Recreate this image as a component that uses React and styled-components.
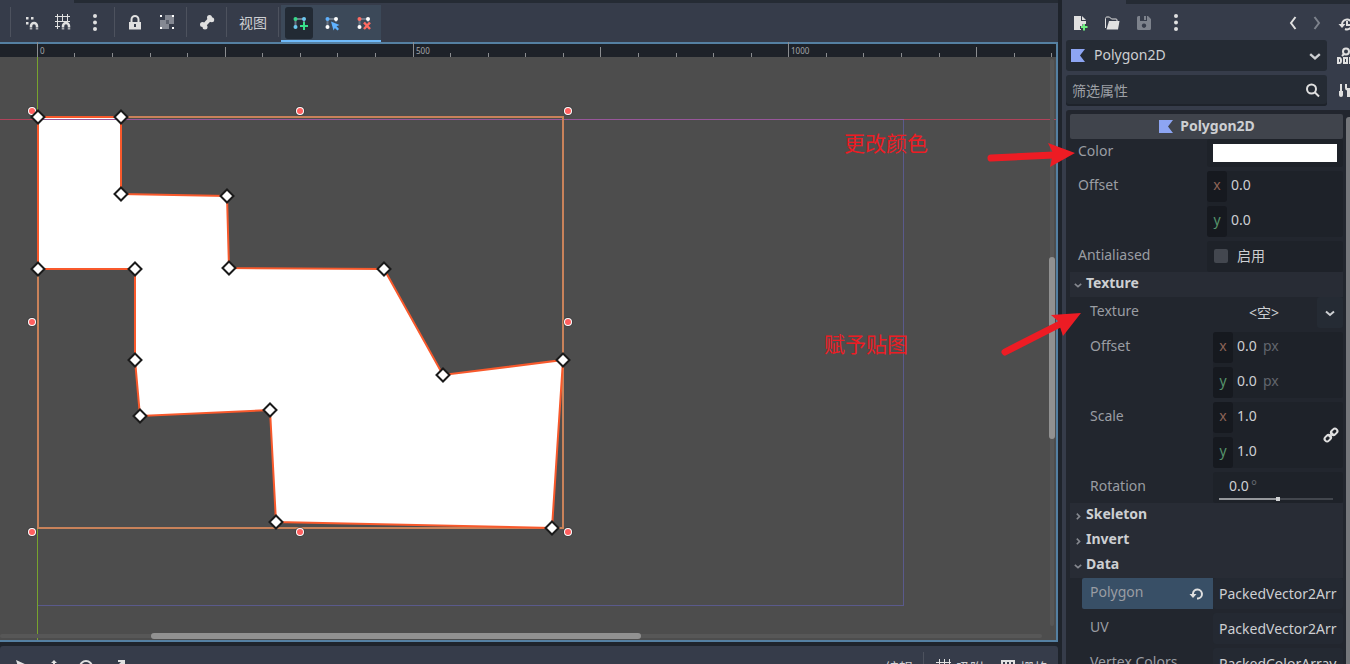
import React from "react";
import styled, { createGlobalStyle, css } from "styled-components";

const c = {
  base: "#1f242c",
  bar: "#363c4a",
  strip: "#252b34",
  field: "#1e2229",
  panel: "#22262e",
  section: "#282c35",
  accent: "#70bafa",
  icon: "#e0e0e0",
  text: "#cdcfd2",
  dim: "#9a9da3",
};

const Global = createGlobalStyle`
  * { box-sizing: border-box; }
  body {
    margin: 0;
    background: ${c.base};
    color: ${c.text};
    font: 14px/20px "Noto Sans", "Noto Sans CJK SC", sans-serif;
    overflow: hidden;
  }
  button, input, select { font: inherit; color: inherit; margin: 0; padding: 0; border: 0; background: none; }
  svg { display: block; overflow: visible; flex: none; }
`;

const Editor = styled.div`
  position: relative;
  display: flex;
  gap: 4px;
  height: 100vh;
  overflow: hidden;
`;

const Workspace = styled.main`
  flex: 1;
  min-width: 0;
  display: flex;
  flex-direction: column;
`;

const TabStrip = styled.div`
  flex: none;
  height: ${(p) => p.$height}px;
  background: ${c.strip};
  &::before {
    content: "";
    display: block;
    width: ${(p) => p.$tab}px;
    height: 100%;
    background: ${c.bar};
  }
`;

const Toolbar = styled.div`
  flex: none;
  display: flex;
  align-items: flex-start;
  height: 39px;
  padding: 4px 5px 0;
  background: ${c.bar};
`;

const ToolGroup = styled.div`
  display: flex;
  gap: 4px;
`;

const ContextGroup = styled(ToolGroup)`
  height: 37px;
  margin-top: -2px;
  padding: 2px 4px 0;
  background: #3c4959;
  border-bottom: 2px solid ${c.accent};
`;

const ToolButton = styled.button`
  display: flex;
  align-items: center;
  justify-content: center;
  width: ${(p) => p.$width || 28}px;
  height: 32px;
  border-radius: 3px;
  ${(p) => p.$active && css`background: #222a34;`}
`;

const Separator = styled.span`
  width: 1px;
  height: 30px;
  margin: 0 ${(p) => (p.$flush ? 2 : 6)}px 0 5px;
  background: #4d525e;
`;

const Viewport = styled.section`
  flex: 1;
  min-height: 0;
  position: relative;
  display: flex;
  flex-direction: column;
  border: 2px solid #5580a2;
  border-left: 0;
  background: #4d4d4d;
`;

const Ruler = styled.svg`
  width: 100%;
  height: 13px;
  background: ${c.field};
`;

const Canvas = styled.svg`
  width: 100%;
  flex: 1 1 0;
  min-height: 0;
  overflow: hidden;
`;

const ScrollTrack = styled.div`
  position: absolute;
  border-radius: 3px;
  background: #575757;
  ${(p) =>
    p.$vertical
      ? css`top: 15px; right: 2px; bottom: 14px; width: 4px;`
      : css`left: 0; right: 14px; bottom: 2px; height: 4px;`}
`;

const ScrollThumb = styled.div`
  position: absolute;
  border-radius: 3px;
  background: #919191;
  ${(p) =>
    p.$vertical
      ? css`top: 35%; height: 32%; left: -1px; width: 6px;`
      : css`left: 14.5%; width: 47%; top: -1px; height: 6px;`}
`;

const BottomDock = styled.div`
  flex: none;
  height: 18px;
  margin-top: 4px;
  overflow: hidden;
  border-radius: 3px 3px 0 0;
  background: ${c.bar};
`;

const BottomBar = styled.div`
  display: flex;
  align-items: center;
  height: 44px;
  padding: 0 10px 0 12px;
`;

const BottomTools = styled.div`
  display: flex;
  gap: 16px;
  margin-right: auto;
`;

const BottomToggles = styled.div`
  display: flex;
  gap: 16px;
`;

const BarButton = styled.button`
  display: flex;
  align-items: center;
  gap: 4px;
  color: ${c.text};
`;

const BarSeparator = styled.span`
  width: 1px;
  height: 32px;
  margin: 0 12px 0 10px;
  background: #4d525e;
`;

const Inspector = styled.aside`
  flex: 0 0 288px;
  min-width: 0;
  display: flex;
  flex-direction: column;
  background: ${c.bar};
`;

const DockHeader = styled.div`
  flex: none;
  display: flex;
  height: 36px;
  padding: 3px 0 0 4px;
`;

const DockNav = styled(ToolGroup)`
  margin-left: auto;
`;

const DockRow = styled.div`
  flex: none;
  display: flex;
  height: 31px;
  margin-bottom: 4px;
  padding-left: 4px;
`;

const EdgeButton = styled.button`
  display: flex;
  align-items: center;
  width: 23px;
  padding-left: ${(p) => p.$inset || 10}px;
  overflow: hidden;
`;

const InputBox = styled.label`
  flex: 1;
  min-width: 0;
  display: flex;
  align-items: center;
  padding: 0 6px 0 ${(p) => (p.$search ? 6 : 4)}px;
  border-radius: 3px;
  background: ${c.strip};
  ${(p) => p.$search && css`box-shadow: inset 0 -2px #1e232b;`}
`;

const NodeSelect = styled.select`
  flex: 1;
  min-width: 0;
  margin-left: 8px;
  padding-bottom: 2px;
  appearance: none;
  outline: 0;
`;

const SearchInput = styled.input`
  flex: 1;
  min-width: 0;
  outline: 0;
  &::placeholder { color: #9da0a6; opacity: 1; }
`;

const Panel = styled.div`
  flex: 1;
  min-height: 0;
  display: flex;
  gap: 3px;
  margin-left: 4px;
  padding: 4px 0 0 4px;
  overflow: hidden;
  border-top-left-radius: 3px;
  background: ${c.panel};
`;

const Properties = styled.div`
  flex: 1;
  min-width: 0;
`;

const PanelScroll = styled.div`
  width: 4px;
  margin-top: 3px;
  border-radius: 3px 0 0 0;
  background: #75777b;
`;

const Category = styled.h2`
  display: flex;
  align-items: center;
  justify-content: center;
  gap: 6px;
  height: 25px;
  margin: 0;
  border-radius: 2px;
  background: #40444c;
  font-size: 14px;
  line-height: 20px;
`;

const CategoryName = styled.span`
  padding-bottom: 2px;
`;

const SectionButton = styled.button`
  display: flex;
  align-items: center;
  gap: 4px;
  width: 100%;
  height: 25px;
  padding: 0 4px;
  background: ${c.section};
  font-weight: 700;
`;

const SectionName = styled.span`
  padding-bottom: 4px;
`;

const Rows = styled.div`
  display: grid;
  gap: 4px;
  padding-left: ${(p) => (p.$nested ? 12 : 0)}px;
`;

const Row = styled.div`
  display: grid;
  grid-template-columns: minmax(0, 1fr) ${(p) => (p.$nested ? 130 : 136)}px;
`;

const RowLabel = styled.label`
  display: flex;
  justify-content: space-between;
  align-items: center;
  height: ${(p) => (p.$short ? 28 : 31)}px;
  padding: 0 8px 4px;
  color: ${c.dim};
  ${(p) => p.$changed && css`background: #384f66; border-radius: 2px 0 0 2px;`}
`;

const RevertSlot = styled.span`
  padding-top: 4px;
`;

const Field = styled.div`
  position: relative;
  display: grid;
  gap: 4px;
  align-items: start;
  min-width: 0;
  border-radius: 3px;
  background: ${c.field};
`;

const Axis = styled.label`
  display: flex;
  align-items: center;
  height: 31px;
  padding-bottom: 3px;
`;

const AxisName = styled.span`
  width: 20px;
  height: 31px;
  margin: 3px 4px 0 0;
  border-radius: 3px;
  background: #16191f;
  color: ${(p) => (p.$axis === "x" ? "#8d6457" : "#55936b")};
  line-height: 27px;
  text-align: center;
`;

const NumberInput = styled.input`
  width: 26px;
  height: 20px;
  outline: 0;
`;

const Unit = styled.span`
  color: #62666d;
`;

const Degree = styled(Unit)`
  margin-left: -4px;
`;

const ColorField = styled(Field)`
  height: 28px;
  padding: 5px 6px;
`;

const ColorInput = styled.input`
  width: 100%;
  height: 18px;
  appearance: none;
  &::-webkit-color-swatch-wrapper { padding: 0; }
  &::-webkit-color-swatch { border: 0; border-radius: 0; }
`;

const CheckField = styled.label`
  display: flex;
  align-items: center;
  gap: 9px;
  height: 31px;
  padding: 0 0 1px 7px;
  border-radius: 3px;
  background: ${c.field};
`;

const CheckBox = styled.input`
  width: 14px;
  height: 14px;
  appearance: none;
  border-radius: 2px;
  background: #43474f;
`;

const ResourceField = styled.div`
  display: flex;
  height: 31px;
`;

const ResourceButton = styled.button`
  flex: 1;
  padding-right: 2px;
`;

const DropButton = styled.button`
  display: flex;
  align-items: center;
  justify-content: center;
  width: 26px;
  border-radius: 3px;
  background: ${c.strip};
`;

const ValueButton = styled.button`
  height: 31px;
  padding-left: 6px;
  overflow: hidden;
  border-radius: 3px;
  background: #242932;
  text-align: left;
`;

const LinkButton = styled.button`
  position: absolute;
  right: 4px;
  top: 25px;
`;

const RotationField = styled(Field)`
  gap: 0;
  height: 31px;
  padding: 4px 10px 0 6px;
`;

const RotationValue = styled.span`
  display: flex;
  height: 19px;
  padding-left: 10px;
`;

const Slider = styled.input`
  width: 100%;
  height: 6px;
  appearance: none;
  background: linear-gradient(90deg, #96989c 51%, #42464d 51%) center / 100% 2px no-repeat;
  &::-webkit-slider-thumb {
    appearance: none;
    width: 4px;
    height: 4px;
    background: #d0d2d4;
  }
`;

const Annotations = styled.svg`
  position: absolute;
  inset: 0;
  width: 100%;
  height: 100%;
  pointer-events: none;
`;

/* ---------- icons ---------- */

const Svg = ({ children, w = 16, h = 16 }) => (
  <svg width={w} height={h} viewBox={`0 0 ${w} ${h}`} fill={c.icon} aria-hidden="true">
    {children}
  </svg>
);

const Magnet = () => (
  <g fill="none" stroke={c.icon}>
    <path d="M8 12.500V11a3 3 0 0 1 6 0V12.500" strokeWidth="2.500" />
    <path d="M8 13v1.500M14 13v1.500" strokeWidth="2.500" opacity="0.700" />
  </g>
);

const SmartSnapIcon = () => (
  <Svg>
    <path d="M3 2h2.500v2.500H3zM8 2h2.500v2.500H8zM3 7h2.500v2.500H3z" />
    <Magnet />
  </Svg>
);

const GridSnapIcon = () => (
  <Svg>
    <path d="M2.500 -1V14M7.500 -1V6M12.500 -1V6M0 1.500H15M0 6.500H15M0 11.500H5" stroke={c.icon} fill="none" />
    <Magnet />
  </Svg>
);

const DotsIcon = () => (
  <Svg>
    <circle cx="8" cy="1" r="2" />
    <circle cx="8" cy="7.500" r="2" />
    <circle cx="8" cy="14" r="2" />
  </Svg>
);

const LockIcon = () => (
  <Svg>
    <path d="M4.500 7V4.500a3.500 3.500 0 0 1 7 0V7" fill="none" stroke={c.icon} strokeWidth="2" />
    <path fillRule="evenodd" d="M2 7h12v7.500H2zM7 9v3h2V9z" />
  </Svg>
);

const GroupIcon = () => (
  <Svg>
    <path d="M6 0h9v9H6zM1 5h9v9H1z" fill="#848892" />
    <path d="M7 5h3v4H7z" fill="#5c616d" />
    <path d="M1 0h2v2H1zM13 0h2v2h-2zM1 12h2v2H1zM13 12h2v2h-2z" fill="#fff" />
  </Svg>
);

const BoneIcon = () => (
  <Svg>
    <path d="M5 10.500L11 4" stroke={c.icon} strokeWidth="4" />
    <circle cx="3.500" cy="9.500" r="2.500" />
    <circle cx="6" cy="12" r="2.500" />
    <circle cx="10.500" cy="2.500" r="2.500" />
    <circle cx="12.700" cy="4.800" r="2.500" />
  </Svg>
);

const PointsIcon = ({ first, rest, children }) => (
  <Svg>
    <path d="M4.500 12V4H13V7" fill="none" stroke="#6c7887" strokeWidth="2" />
    <circle cx="4.500" cy="4" r="2" fill={first} />
    <circle cx="13" cy="4" r="2" fill={rest} />
    <circle cx="4.500" cy="12" r="2" fill={rest} />
    {children}
  </Svg>
);

const FileNewIcon = () => (
  <Svg>
    <path d="M2 1h7v5h5v3h-3.500v2H8v3h1v1H2zM10 1l4 4h-4z" />
    <path d="M12 9v6.500M9 12h6.500" stroke="#6ef07f" strokeWidth="2" />
  </Svg>
);

const FolderIcon = () => (
  <Svg>
    <path d="M1.500 13V3.500c0-.8.500-1.500 1.500-1.500h2.500l2 2H12c.8 0 1 .4 1 1v1" fill="none" stroke={c.icon} />
    <path d="M5 6h10.500l-1.500 8.500H2.500z" />
  </Svg>
);

const SaveIcon = () => (
  <Svg>
    <path
      fillRule="evenodd"
      fill="#7d828c"
      d="M1 2.500A1.500 1.500 0 0 1 2.500 1H4v5h7V1h1l3 3v9.500a1.500 1.500 0 0 1-1.500 1.500h-11A1.500 1.500 0 0 1 1 13.500zM8 8.500a2.200 2.200 0 1 0 .01 0zM8 1h2v4H8z"
    />
  </Svg>
);

const ArrowIcon = ({ right }) => (
  <Svg>
    <path
      d={right ? "M5.500 2L10 8L5.500 14" : "M10.500 2L6 8L10.500 14"}
      fill="none"
      stroke={right ? "#7d828c" : c.icon}
      strokeWidth="2"
    />
  </Svg>
);

const HistoryIcon = () => (
  <Svg>
    <path d="M4 8.500a5 5 0 1 1 3 4.500M9 5v4h3" fill="none" stroke={c.icon} strokeWidth="2" />
    <path d="M0.500 8h7L4 12z" />
  </Svg>
);

const DocIcon = () => (
  <Svg>
    <circle cx="9" cy="3.500" r="3" fill="none" stroke={c.icon} strokeWidth="2" />
    <path d="M7 6L5 8" stroke={c.icon} strokeWidth="2" />
    <path
      d="M1 10v5h1.500q1.500 0 1.500-2.500T2.500 10zM7 10h3v5H7zM15 10h-2v5h2"
      fill="none"
      stroke={c.icon}
      strokeWidth="2"
    />
  </Svg>
);

const ToolsIcon = () => (
  <Svg>
    <path d="M3 1h2v7h1v4q0 2-2 2t-2-2V8h1z" />
    <path d="M8 1v4q0 2 2 2.500V14h3V7.500q2-.5 2-2.500V1h-2v4h-3V1z" />
  </Svg>
);

const PolygonIcon = () => (
  <Svg>
    <path d="M1 1h14l-5 6.500 5 6.500H1z" fill="#8da5f3" />
  </Svg>
);

const SearchIcon = () => (
  <Svg>
    <circle cx="6.500" cy="6" r="4.500" fill="none" stroke={c.icon} strokeWidth="2" />
    <path d="M9.500 9L14 13.500" stroke={c.icon} strokeWidth="2" />
  </Svg>
);

const Chevron = ({ size = 10, color = c.text, side }) => (
  <svg width={size} height={size} viewBox="0 0 10 10" aria-hidden="true">
    <path d={side ? "M3.500 2L7 5.500L3.500 9" : "M1 3.500L5 7L9 3.500"} fill="none" stroke={color} strokeWidth="2" />
  </svg>
);

const RevertIcon = () => (
  <Svg>
    <path d="M4 9V7.500a4.500 4.500 0 1 1 5 5H8" fill="none" stroke={c.icon} strokeWidth="2" />
    <path d="M0.500 8h7L4 12z" />
  </Svg>
);

const LinkIcon = () => (
  <Svg>
    <g fill="none" stroke={c.icon} strokeWidth="2" transform="rotate(-45 8 8)">
      <rect x="0" y="5.500" width="7" height="5" rx="2.500" />
      <rect x="9" y="5.500" width="7" height="5" rx="2.500" />
      <path d="M5 8h6" />
    </g>
  </Svg>
);

/* ---------- viewport ---------- */

const POINTS = [
  [38, 117], [121, 117], [121, 194], [227, 196], [229, 268], [384, 269], [443, 375], [563, 360],
  [552, 528], [276, 522], [270, 410], [140, 416], [135, 360], [135, 269], [38, 269],
];

const HANDLES = [
  [32, 111], [300, 111], [568, 111], [32, 322], [568, 322], [32, 532], [300, 532], [568, 532],
];

const TICKS = Array.from({ length: 28 }, (_, i) => ({
  x: Math.floor(37.4 + i * 37.57),
  major: i % 10 === 0,
  mid: i % 5 === 0,
  value: i * 50,
}));

function RulerBar() {
  return (
    <Ruler aria-hidden="true">
      {TICKS.map((t) => (
        <g key={t.x}>
          <rect
            x={t.x}
            y={t.major ? -2 : t.mid ? 3 : 9}
            width="1"
            height={t.major ? 15 : t.mid ? 10 : 4}
            fill="#8b8d90"
          />
          {t.major && (
            <text x={t.x + 3} y="10" fontSize="8" fill="#a4a6a9">
              {t.value}
            </text>
          )}
        </g>
      ))}
    </Ruler>
  );
}

function PolygonCanvas() {
  return (
    <Canvas>
      <g transform="translate(0 -57)">
        <rect x="37.500" y="119.500" width="866" height="486" fill="none" stroke="#5a5a8c" />
        <polygon points={POINTS.map((p) => p.join(",")).join(" ")} fill="#fff" />
        <rect x="0" y="119" width="100%" height="1" fill="#b0425a" />
        <rect x="38" y="119" width="866" height="1" fill="#97569a" />
        <rect x="37" y="57" width="1" height="1000" fill="#78a32e" />
        <rect x="38" y="117" width="525" height="411" fill="none" stroke="#c9825a" strokeWidth="2" />
        <polygon points={POINTS.map((p) => p.join(",")).join(" ")} fill="none" stroke="#f8592c" strokeWidth="2" />
        {HANDLES.map(([x, y]) => (
          <g key={`${x}-${y}`}>
            <circle cx={x} cy={y} r="5" fill="#333" opacity="0.500" />
            <circle cx={x} cy={y} r="4" fill="#fff" />
            <circle cx={x} cy={y} r="3" fill="#ff5f5f" />
          </g>
        ))}
        {POINTS.map(([x, y]) => (
          <path
            key={`${x}-${y}`}
            d={`M${x} ${y - 6.5}L${x + 6.5} ${y}L${x} ${y + 6.5}L${x - 6.5} ${y}Z`}
            fill="#fff"
            stroke="#1a1a1a"
            strokeWidth="2"
          />
        ))}
      </g>
    </Canvas>
  );
}

/* ---------- inspector ---------- */

function Vector({ id, value, unit, linked }) {
  return (
    <Field>
      {["x", "y"].map((axis) => (
        <Axis key={axis}>
          <AxisName $axis={axis}>{axis}</AxisName>
          <NumberInput id={`${id}-${axis}`} defaultValue={value} />
          {unit && <Unit>{unit}</Unit>}
        </Axis>
      ))}
      {linked && (
        <LinkButton aria-label="Link">
          <LinkIcon />
        </LinkButton>
      )}
    </Field>
  );
}

function Section({ title, open, children }) {
  return (
    <>
      <SectionButton aria-expanded={!!open}>
        <Chevron size={8} color="#85888f" side={!open} />
        <SectionName>{title}</SectionName>
      </SectionButton>
      {open && <Rows $nested>{children}</Rows>}
    </>
  );
}

function ArrayRow({ id, label, value, changed }) {
  return (
    <Row $nested>
      <RowLabel htmlFor={id} $changed={changed}>
        {label}
        {changed && (
          <RevertSlot>
            <RevertIcon />
          </RevertSlot>
        )}
      </RowLabel>
      <ValueButton id={id}>{value}</ValueButton>
    </Row>
  );
}

function InspectorDock() {
  return (
    <Inspector>
      <TabStrip $height={4} $tab={64} />
      <DockHeader>
        <ToolGroup>
          <ToolButton aria-label="New"><FileNewIcon /></ToolButton>
          <ToolButton aria-label="Open"><FolderIcon /></ToolButton>
          <ToolButton aria-label="Save"><SaveIcon /></ToolButton>
          <ToolButton aria-label="More"><DotsIcon /></ToolButton>
        </ToolGroup>
        <DockNav>
          <ToolButton $width={20} aria-label="Back"><ArrowIcon /></ToolButton>
          <ToolButton $width={20} aria-label="Forward"><ArrowIcon right /></ToolButton>
        </DockNav>
        <EdgeButton $inset={11} aria-label="History"><HistoryIcon /></EdgeButton>
      </DockHeader>
      <DockRow>
        <InputBox>
          <PolygonIcon />
          <NodeSelect aria-label="Node">
            <option>Polygon2D</option>
          </NodeSelect>
          <Chevron size={12} />
        </InputBox>
        <EdgeButton aria-label="Docs"><DocIcon /></EdgeButton>
      </DockRow>
      <DockRow>
        <InputBox $search>
          <SearchInput placeholder="筛选属性" aria-label="筛选属性" />
          <SearchIcon />
        </InputBox>
        <EdgeButton aria-label="Tools"><ToolsIcon /></EdgeButton>
      </DockRow>
      <Panel>
        <Properties>
          <Category>
            <PolygonIcon />
            <CategoryName>Polygon2D</CategoryName>
          </Category>
          <Rows>
            <Row>
              <RowLabel $short htmlFor="color">Color</RowLabel>
              <ColorField>
                <ColorInput id="color" type="color" defaultValue="#ffffff" />
              </ColorField>
            </Row>
            <Row>
              <RowLabel htmlFor="offset-x">Offset</RowLabel>
              <Vector id="offset" value="0.0" />
            </Row>
            <Row>
              <RowLabel htmlFor="antialiased">Antialiased</RowLabel>
              <CheckField>
                <CheckBox id="antialiased" type="checkbox" />
                启用
              </CheckField>
            </Row>
          </Rows>
          <Section title="Texture" open>
            <Row $nested>
              <RowLabel htmlFor="texture">Texture</RowLabel>
              <ResourceField>
                <ResourceButton id="texture">&lt;空&gt;</ResourceButton>
                <DropButton aria-label="Texture menu"><Chevron /></DropButton>
              </ResourceField>
            </Row>
            <Row $nested>
              <RowLabel htmlFor="tex-offset-x">Offset</RowLabel>
              <Vector id="tex-offset" value="0.0" unit="px" />
            </Row>
            <Row $nested>
              <RowLabel htmlFor="tex-scale-x">Scale</RowLabel>
              <Vector id="tex-scale" value="1.0" linked />
            </Row>
            <Row $nested>
              <RowLabel htmlFor="rotation">Rotation</RowLabel>
              <RotationField>
                <RotationValue>
                  <NumberInput id="rotation" defaultValue="0.0" />
                  <Degree>°</Degree>
                </RotationValue>
                <Slider type="range" min="-360" max="360" defaultValue="10" aria-label="Rotation" />
              </RotationField>
            </Row>
          </Section>
          <Section title="Skeleton" />
          <Section title="Invert" />
          <Section title="Data" open>
            <ArrayRow id="polygon" label="Polygon" value="PackedVector2Arr" changed />
            <ArrayRow id="uv" label="UV" value="PackedVector2Arr" />
            <ArrayRow id="colors" label="Vertex Colors" value="PackedColorArray" />
          </Section>
        </Properties>
        <PanelScroll />
      </Panel>
    </Inspector>
  );
}

export default function App() {
  return (
    <>
      <Global />
      <Editor>
        <Workspace>
          <TabStrip $height={3} $tab={74} />
          <Toolbar>
            <Separator />
            <ToolGroup>
              <ToolButton aria-label="Smart snap"><SmartSnapIcon /></ToolButton>
              <ToolButton aria-label="Grid snap"><GridSnapIcon /></ToolButton>
              <ToolButton aria-label="Snap options"><DotsIcon /></ToolButton>
            </ToolGroup>
            <Separator />
            <ToolGroup>
              <ToolButton aria-label="Lock"><LockIcon /></ToolButton>
              <ToolButton aria-label="Group"><GroupIcon /></ToolButton>
            </ToolGroup>
            <Separator />
            <ToolButton aria-label="Skeleton"><BoneIcon /></ToolButton>
            <Separator />
            <ToolButton $width={40}>视图</ToolButton>
            <Separator $flush />
            <ContextGroup>
              <ToolButton $active aria-label="Create points">
                <PointsIcon first="#38d98a" rest="#6cc8f0">
                  <path d="M13 7v8M9 11h8" stroke="#38e08a" strokeWidth="2" />
                </PointsIcon>
              </ToolButton>
              <ToolButton aria-label="Edit points">
                <PointsIcon first="#5fb2ff" rest="#fff">
                  <path d="M8 6.500l8.500 3.500-3 1.200 2.500 2.800-1.500 1.500-2.600-2.600-1.400 2.600z" fill="#5fb2ff" />
                </PointsIcon>
              </ToolButton>
              <ToolButton aria-label="Erase points">
                <PointsIcon first="#ff6b62" rest="#fff">
                  <path d="M9 7.500l6 6.500M15 7.500l-6 6.500" stroke="#ff6b62" strokeWidth="2.500" />
                </PointsIcon>
              </ToolButton>
            </ContextGroup>
          </Toolbar>
          <Viewport>
            <RulerBar />
            <PolygonCanvas />
            <ScrollTrack $vertical><ScrollThumb $vertical /></ScrollTrack>
            <ScrollTrack><ScrollThumb /></ScrollTrack>
          </Viewport>
          <BottomDock>
            <BottomBar>
              <BottomTools>
                <BarButton aria-label="Select"><Svg><path d="M4 0l11 5-5 2-2 6z" /></Svg></BarButton>
                <BarButton aria-label="Move"><Svg><path d="M10 0l3 3h-2v10H9V3H7z" /></Svg></BarButton>
                <BarButton aria-label="Rotate">
                  <Svg><circle cx="10" cy="7" r="6" fill="none" stroke={c.icon} strokeWidth="2" /></Svg>
                </BarButton>
                <BarButton aria-label="Scale"><Svg><path d="M10 0h7v8h-2V4l-6 6-2-2 6-6h-3z" /></Svg></BarButton>
              </BottomTools>
              <BarButton>编辑</BarButton>
              <BarSeparator />
              <BottomToggles>
                <BarButton>
                  <Svg><path d="M3.500 -1V15M8.500 -1V15M13.500 -1V15M0 2.500H15M0 7.500H15" stroke={c.icon} /></Svg>
                  吸附
                </BarButton>
                <BarButton>
                  <Svg><path fillRule="evenodd" d="M1 0h14v14H1zM3 2v3h2V2zM7 2v3h2V2zM11 2v3h2V2z" /></Svg>
                  栅格
                </BarButton>
              </BottomToggles>
            </BottomBar>
          </BottomDock>
        </Workspace>
        <InspectorDock />
        <Annotations fill="#ed1c24" fontSize="21">
          <text x="844" y="151">更改颜色</text>
          <text x="824" y="352">赋予贴图</text>
          <path d="M991 158L1054 155M1005 352L1062 323" stroke="#ed1c24" strokeWidth="7" strokeLinecap="round" />
          <path d="M1075 153L1048 143L1053 153L1050 167ZM1081 313L1051 315L1058 321L1063 336Z" />
        </Annotations>
      </Editor>
    </>
  );
}
